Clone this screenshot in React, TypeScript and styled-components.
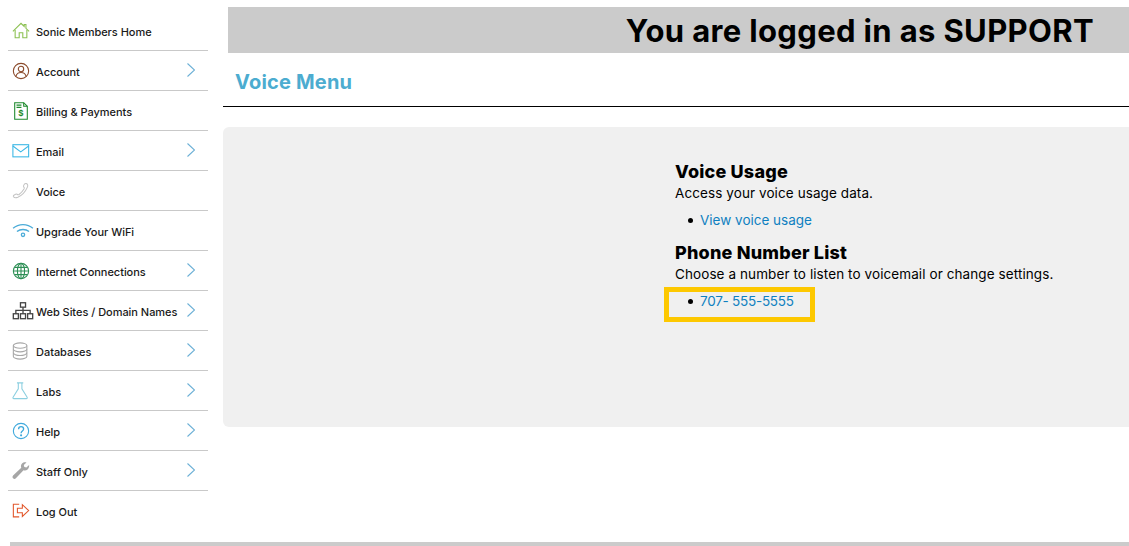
import React from 'react';
import styled, { createGlobalStyle } from 'styled-components';

const GlobalStyle = createGlobalStyle`
  html, body {
    margin: 0;
    padding: 0;
    background: #fff;
    overflow: hidden;
  }
  body {
    font-family: 'Inter', 'Liberation Sans', sans-serif;
    color: #000;
  }
`;

const Page = styled.div`
  width: 1129px;
  height: 546px;
  display: flex;
  flex-direction: column;
  overflow: hidden;
`;

const Columns = styled.div`
  flex: 1;
  display: flex;
  min-height: 0;
`;

const Footer = styled.div`
  height: 4px;
  margin-left: 10px;
  background: #cbcbcb;
`;

const Sidebar = styled.nav`
  width: 200px;
  margin: 11px 15px 0 8px;
  flex-shrink: 0;
`;

const NavRow = styled.a`
  height: 40px;
  box-sizing: border-box;
  display: flex;
  align-items: center;
  padding: 0 13px 0 4px;
  border-bottom: 1.5px solid ${(p: { $last?: boolean }) => (p.$last ? 'transparent' : '#c9c9c9')};
  font-size: 11px;
  font-weight: 500;
  letter-spacing: -0.03px;
  color: #1a1a1a;
`;

const IconSlot = styled.span`
  width: 24px;
  flex-shrink: 0;
  display: flex;
  align-items: center;
`;

const NavIcon = styled.svg<{ $wide?: boolean }>`
  width: ${(p) => (p.$wide ? 22 : 18)}px;
  height: ${(p) => (p.$wide ? 22 : 18)}px;
  flex-shrink: 0;
  fill: none;
  stroke-width: 1.2;
`;

const NavLabel = styled.span`
  flex: 1;
  padding-top: 3px;
  white-space: nowrap;
`;

const Chevron = styled.svg`
  width: 8px;
  height: 14px;
  flex-shrink: 0;
  margin-bottom: 2px;
  fill: none;
  stroke: #6cb0d6;
  stroke-width: 1.1;
`;

const Main = styled.main`
  flex: 1;
  min-width: 0;
  padding-top: 7px;
`;

const Banner = styled.div`
  height: 46px;
  margin-left: 5px;
  padding-right: 35px;
  background: #cbcbcb;
  display: flex;
  align-items: center;
  justify-content: flex-end;
  font-size: 31px;
  font-weight: 700;
  letter-spacing: 0.35px;
  white-space: nowrap;
`;

const TitleBar = styled.div`
  height: 54px;
  box-sizing: border-box;
  padding: 17px 0 0 12px;
  border-bottom: 1.5px solid #000;
`;

const Title = styled.h1`
  margin: 0;
  font-size: 20px;
  line-height: 25px;
  font-weight: 700;
  letter-spacing: 0.2px;
  color: #4cacd0;
`;

const Panel = styled.section`
  margin-top: 20px;
  height: 300px;
  box-sizing: border-box;
  padding: 33px 0 0 452px;
  background: #f0f0f0;
  border-radius: 6px 0 0 6px;
`;

const Heading = styled.h2`
  margin: 0;
  font-size: 18px;
  line-height: 23px;
  font-weight: 800;
  letter-spacing: 0.2px;
`;

const Description = styled.p`
  margin: 0;
  font-size: 13.5px;
  line-height: 20px;
  letter-spacing: 0.09px;
`;

const LinkList = styled.ul`
  position: relative;
  margin: 7px 0 11px;
  padding: 0 0 0 13px;
  list-style: none;
  font-size: 13.5px;
  line-height: 20px;
`;

const LinkItem = styled.li`
  display: flex;
  align-items: center;
  gap: 7px;

  &::before {
    content: '';
    width: 5px;
    height: 5px;
    border-radius: 50%;
    background: #000;
  }
`;

const TextLink = styled.a<{ $tight?: boolean }>`
  color: #0f80c0;
  letter-spacing: ${(p) => (p.$tight ? '-0.25px' : '0')};
`;

const Highlight = styled.div`
  position: absolute;
  left: -11px;
  top: -4px;
  width: 151px;
  height: 35px;
  box-sizing: border-box;
  border: 5px solid #fdc800;
`;

const box = '0 0 20 20';

const items: { label: string; more?: boolean; icon: React.ReactNode }[] = [
  {
    label: 'Sonic Members Home',
    icon: (
      <NavIcon viewBox={box} stroke="#8cc152">
        <path d="M1 10.500 10 1.500l3.500 3.500V2.800h2v4.200l3.500 3.500" />
        <path d="M3.500 9v8.500h4.500v-5.500h4v5.500h4.500V9" />
      </NavIcon>
    ),
  },
  {
    label: 'Account',
    more: true,
    icon: (
      <NavIcon viewBox={box} stroke="#8b4a2b">
        <circle cx="10" cy="10" r="8.500" />
        <circle cx="10" cy="7.800" r="3" />
        <path d="M4.300 16c.8-3 3-4.300 5.700-4.300s4.900 1.300 5.700 4.300" />
      </NavIcon>
    ),
  },
  {
    label: 'Billing & Payments',
    icon: (
      <NavIcon viewBox={box} stroke="#1e8a2e">
        <path d="M3 .8h10l4 4v14.400H3z" />
        <path d="M5 3.500h5.500M5 6h5.500M13 .8v4h4" />
        <text x="10" y="16" fontSize="9" fontWeight="700" textAnchor="middle" fill="#1e8a2e" stroke="none">$</text>
      </NavIcon>
    ),
  },
  {
    label: 'Email',
    more: true,
    icon: (
      <NavIcon viewBox={box} stroke="#3cb8e6">
        <rect x="1" y="3" width="17.500" height="13.500" />
        <path d="m1 4.500 8.700 6.500 8.800-6.500" />
      </NavIcon>
    ),
  },
  {
    label: 'Voice',
    icon: (
      <NavIcon viewBox={box} stroke="#c4c4c4">
        <path d="M16 1.800c1.700.7 1.800 2.400 1 4.200-2 4.500-6 9-10.500 11-2 .8-3.800.9-4.800-.6-.5-.8 0-1.500.8-2 1-.6 2.300-1.400 3-.8.8.6 1.300 1 2.300.3 2.200-1.700 4.200-4 5.700-6.500.5-.9 0-1.500-.7-2.200-.5-.6.3-1.800.9-2.700.6-.8 1.300-1 2.300-.7z" />
      </NavIcon>
    ),
  },
  {
    label: 'Upgrade Your WiFi',
    icon: (
      <NavIcon $wide viewBox={box} stroke="#4cacd8">
        <path d="M1 7.500c5-4.500 13-4.500 18 0" />
        <path d="M4.500 10.500c3-2.500 8-2.500 11 0" />
        <circle cx="10" cy="13.500" r="1.500" />
      </NavIcon>
    ),
  },
  {
    label: 'Internet Connections',
    more: true,
    icon: (
      <NavIcon viewBox={box} stroke="#2d8f55">
        <circle cx="10" cy="10" r="8.500" />
        <ellipse cx="10" cy="10" rx="4" ry="8.500" />
        <path d="M10 1.500v17M1.500 10h17M2.800 6h14.400M2.800 14h14.400" />
      </NavIcon>
    ),
  },
  {
    label: 'Web Sites / Domain Names',
    more: true,
    icon: (
      <NavIcon $wide viewBox={box} stroke="#444" strokeWidth="0.9">
        <rect x="7.700" y="2.500" width="4.600" height="4" />
        <rect x="1.200" y="12.500" width="4.600" height="4.500" />
        <rect x="7.700" y="12.500" width="4.600" height="4.500" />
        <rect x="14.200" y="12.500" width="4.600" height="4.500" />
        <path d="M10 6.500v6M3.500 12.500V9.500h13v3" />
      </NavIcon>
    ),
  },
  {
    label: 'Databases',
    more: true,
    icon: (
      <NavIcon viewBox={box} stroke="#a8a8a8">
        <ellipse cx="9" cy="4" rx="7.500" ry="3" />
        <path d="M1.500 4v12c0 1.600 3.400 3 7.500 3s7.500-1.400 7.500-3V4" />
        <path d="M1.500 8c0 1.600 3.400 3 7.500 3s7.500-1.400 7.500-3M1.500 12c0 1.600 3.400 3 7.500 3s7.500-1.400 7.500-3" />
      </NavIcon>
    ),
  },
  {
    label: 'Labs',
    more: true,
    icon: (
      <NavIcon viewBox={box} stroke="#8ccfe0">
        <path d="M5.500 1h7M7 1v6.500L1.200 17c-.4.800 0 1.500.8 1.500h14c.8 0 1.200-.7.800-1.500L11 7.500V1" />
      </NavIcon>
    ),
  },
  {
    label: 'Help',
    more: true,
    icon: (
      <NavIcon viewBox={box} stroke="#3fa9dc">
        <circle cx="10" cy="10" r="8.500" />
        <path d="M7.300 8c0-1.700 1.200-2.800 2.800-2.800S12.900 6.300 12.900 7.900c0 2.100-2.800 2.200-2.800 4.500" strokeWidth="1.500" />
        <circle cx="10.100" cy="14.800" r=".6" />
      </NavIcon>
    ),
  },
  {
    label: 'Staff Only',
    more: true,
    icon: (
      <NavIcon viewBox={box} stroke="none">
        <path fill="#a6a6a6" d="M19 3.200 16 6l-2.300-.5-.6-2.200L16.100.6c-2-.8-4.300-.1-5.400 1.500-.9 1.300-1 2.900-.4 4.300L1.200 15c-.9 1-.8 2.300 0 3.100.9.900 2.200.9 3.100 0l8.500-9c1.500.6 3.200.3 4.500-.8 1.300-1.200 2-3 1.700-5.100z" />
      </NavIcon>
    ),
  },
  {
    label: 'Log Out',
    icon: (
      <NavIcon viewBox={box} stroke="#e2572b">
        <path d="M8 2.500H1.500v14H8" />
        <path d="M6 7h5.500V3l7 6.500-7 6.500v-4H6z" />
      </NavIcon>
    ),
  },
];

const App = () => (
  <Page>
    <GlobalStyle />
    <Columns>
      <Sidebar>
        {items.map((item, i) => (
          <NavRow key={item.label} $last={i === items.length - 1}>
            <IconSlot>{item.icon}</IconSlot>
            <NavLabel>{item.label}</NavLabel>
            {item.more && (
              <Chevron viewBox="0 0 8 14">
                <path d="m.5.500 7 6.500-7 6.500" />
              </Chevron>
            )}
          </NavRow>
        ))}
      </Sidebar>
      <Main>
        <Banner>You are logged in as SUPPORT</Banner>
        <TitleBar>
          <Title>Voice Menu</Title>
        </TitleBar>
        <Panel>
          <Heading>Voice Usage</Heading>
          <Description>Access your voice usage data.</Description>
          <LinkList>
            <LinkItem>
              <TextLink>View voice usage</TextLink>
            </LinkItem>
          </LinkList>
          <Heading>Phone Number List</Heading>
          <Description>Choose a number to listen to voicemail or change settings.</Description>
          <LinkList>
            <Highlight />
            <LinkItem>
              <TextLink $tight>707- 555-5555</TextLink>
            </LinkItem>
          </LinkList>
        </Panel>
      </Main>
    </Columns>
    <Footer />
  </Page>
);

export default App;
